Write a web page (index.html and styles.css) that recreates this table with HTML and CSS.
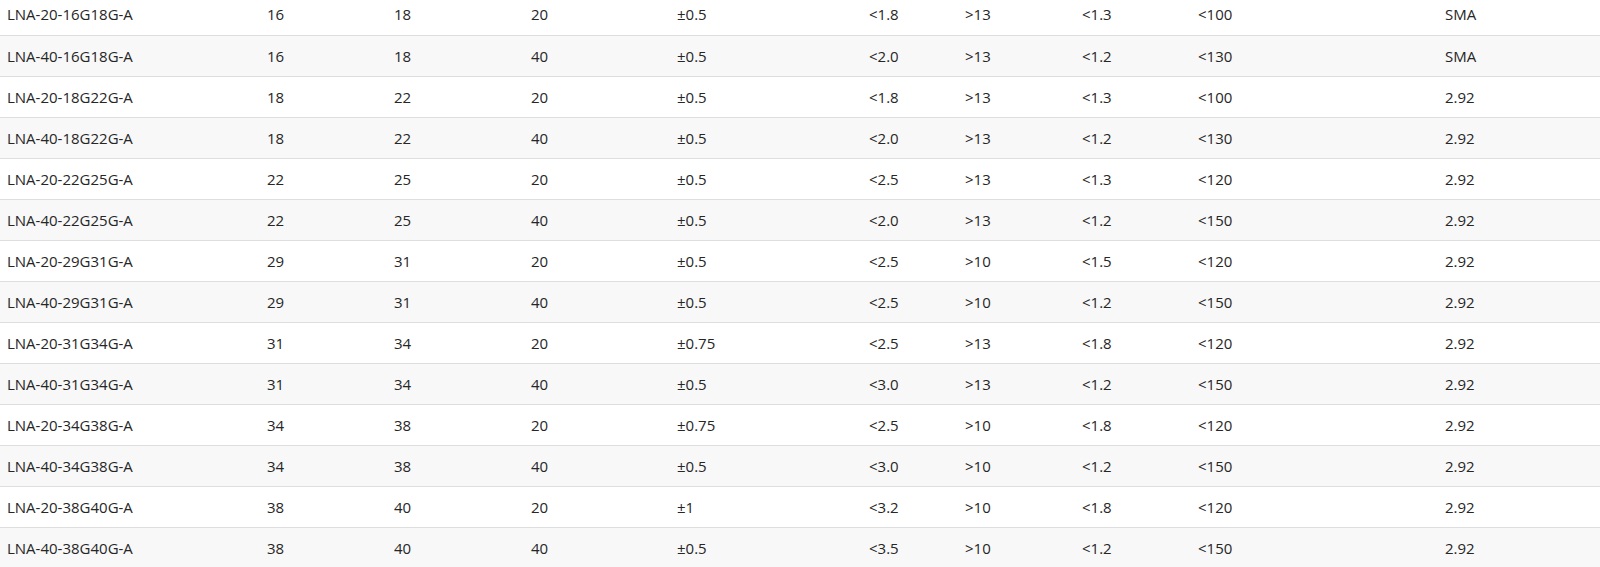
FILE: index.html
```html
<!DOCTYPE html>
<html>
<head>
<meta charset="utf-8">
<link rel="stylesheet" href="styles.css">
</head>
<body>
<div class="scroller">
<table class="spec">
<colgroup>
<col class="c1"><col class="c2"><col class="c3"><col class="c4"><col class="c5"><col class="c6"><col class="c7"><col class="c8"><col class="c9"><col class="c10">
</colgroup>
<tbody>
<tr><td>LNA-20-16G18G-A</td><td>16</td><td>18</td><td>20</td><td>±0.5</td><td>&lt;1.8</td><td>&gt;13</td><td>&lt;1.3</td><td>&lt;100</td><td>SMA</td></tr>
<tr><td>LNA-40-16G18G-A</td><td>16</td><td>18</td><td>40</td><td>±0.5</td><td>&lt;2.0</td><td>&gt;13</td><td>&lt;1.2</td><td>&lt;130</td><td>SMA</td></tr>
<tr><td>LNA-20-18G22G-A</td><td>18</td><td>22</td><td>20</td><td>±0.5</td><td>&lt;1.8</td><td>&gt;13</td><td>&lt;1.3</td><td>&lt;100</td><td>2.92</td></tr>
<tr><td>LNA-40-18G22G-A</td><td>18</td><td>22</td><td>40</td><td>±0.5</td><td>&lt;2.0</td><td>&gt;13</td><td>&lt;1.2</td><td>&lt;130</td><td>2.92</td></tr>
<tr><td>LNA-20-22G25G-A</td><td>22</td><td>25</td><td>20</td><td>±0.5</td><td>&lt;2.5</td><td>&gt;13</td><td>&lt;1.3</td><td>&lt;120</td><td>2.92</td></tr>
<tr><td>LNA-40-22G25G-A</td><td>22</td><td>25</td><td>40</td><td>±0.5</td><td>&lt;2.0</td><td>&gt;13</td><td>&lt;1.2</td><td>&lt;150</td><td>2.92</td></tr>
<tr><td>LNA-20-29G31G-A</td><td>29</td><td>31</td><td>20</td><td>±0.5</td><td>&lt;2.5</td><td>&gt;10</td><td>&lt;1.5</td><td>&lt;120</td><td>2.92</td></tr>
<tr><td>LNA-40-29G31G-A</td><td>29</td><td>31</td><td>40</td><td>±0.5</td><td>&lt;2.5</td><td>&gt;10</td><td>&lt;1.2</td><td>&lt;150</td><td>2.92</td></tr>
<tr><td>LNA-20-31G34G-A</td><td>31</td><td>34</td><td>20</td><td>±0.75</td><td>&lt;2.5</td><td>&gt;13</td><td>&lt;1.8</td><td>&lt;120</td><td>2.92</td></tr>
<tr><td>LNA-40-31G34G-A</td><td>31</td><td>34</td><td>40</td><td>±0.5</td><td>&lt;3.0</td><td>&gt;13</td><td>&lt;1.2</td><td>&lt;150</td><td>2.92</td></tr>
<tr><td>LNA-20-34G38G-A</td><td>34</td><td>38</td><td>20</td><td>±0.75</td><td>&lt;2.5</td><td>&gt;10</td><td>&lt;1.8</td><td>&lt;120</td><td>2.92</td></tr>
<tr><td>LNA-40-34G38G-A</td><td>34</td><td>38</td><td>40</td><td>±0.5</td><td>&lt;3.0</td><td>&gt;10</td><td>&lt;1.2</td><td>&lt;150</td><td>2.92</td></tr>
<tr><td>LNA-20-38G40G-A</td><td>38</td><td>40</td><td>20</td><td>±1</td><td>&lt;3.2</td><td>&gt;10</td><td>&lt;1.8</td><td>&lt;120</td><td>2.92</td></tr>
<tr><td>LNA-40-38G40G-A</td><td>38</td><td>40</td><td>40</td><td>±0.5</td><td>&lt;3.5</td><td>&gt;10</td><td>&lt;1.2</td><td>&lt;150</td><td>2.92</td></tr>
</tbody>
</table>
</div>
</body>
</html>
```
FILE: styles.css
```css
html, body {
  margin: 0;
  padding: 0;
  background: #fff;
  overflow: hidden;
}
.scroller {
  margin-top: -6px;
}
.spec {
  width: 1600px;
  border-collapse: collapse;
  table-layout: fixed;
  font-family: "Open Sans", "Noto Sans", sans-serif;
  font-size: 15px;
  color: #262626;
}
.spec td {
  height: 41px;
  padding: 0 7px;
  border-bottom: 1px solid #dedede;
  vertical-align: middle;
  white-space: nowrap;
  box-sizing: border-box;
}
.spec tr:nth-child(even) td {
  background: #f8f8f8;
}
.spec tr:last-child td {
  border-bottom: none;
}
.c1 { width: 260px; }
.c2 { width: 127px; }
.c3 { width: 137px; }
.c4 { width: 146px; }
.c5 { width: 192px; }
.c6 { width: 96px; }
.c7 { width: 117px; }
.c8 { width: 116px; }
.c9 { width: 247px; }
.c10 { width: 162px; }
```
